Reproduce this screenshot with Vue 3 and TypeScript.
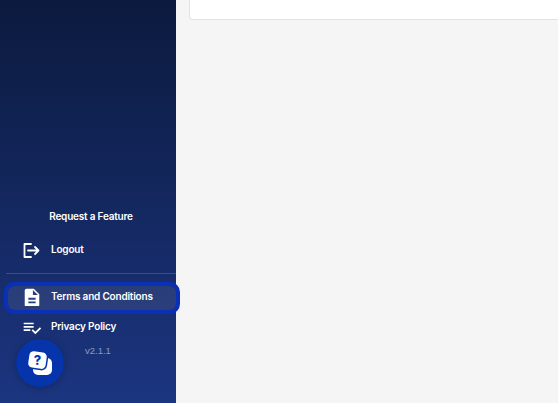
<script setup lang="ts">
  const version = 'v2.1.1'
</script>

<template>
  <div class="page">
    <aside class="sidebar">
      <div class="feature">Request a Feature</div>
      <a class="nav-item logout">
        <svg class="icon" viewBox="0.500 -1 20 20" width="20" height="20" fill="none" stroke="#fff" stroke-width="1.800">
          <path d="M9.500 4H3v13h6.500" stroke-linejoin="round" stroke-linecap="round" />
          <path d="M6.500 10.500H17M13.500 7l3.500 3.500-3.500 3.500" stroke-linejoin="round" stroke-linecap="round" />
        </svg>
        <span>Logout</span>
      </a>
      <div class="divider"></div>
      <a class="nav-item active">
        <svg class="icon" viewBox="1 -1 22 22" width="20" height="20">
          <path fill="#fff" d="M14 2H6c-1.100 0-2 .9-2 2v16c0 1.100.9 2 2 2h12c1.100 0 2-.9 2-2V8l-6-6zm2 16H8v-2h8v2zm0-4H8v-2h8v2zm-3-5V3.500L18.500 9H13z" />
        </svg>
        <span>Terms and Conditions</span>
      </a>
      <a class="nav-item">
        <svg class="icon" viewBox="0 -2 24 24" width="20" height="20">
          <path fill="#fff" d="M14 10H2v2h12v-2zm0-4H2v2h12V6zM2 16h8v-2H2v2zm19.500-4.500L23 13l-6.990 7-4.510-4.500L13 14l3.010 3 5.490-5.500z" />
        </svg>
        <span>Privacy Policy</span>
      </a>
      <div class="version">{{ version }}</div>
    </aside>
    <main class="content">
      <div class="card"></div>
    </main>
    <button class="help">
      <svg viewBox="0 0 26 26" width="26" height="26">
        <rect x="6" y="8" width="19" height="17" rx="5" fill="#fff" />
        <rect x="1" y="1" width="19" height="18" rx="5" fill="#fff" stroke="#0534ab" stroke-width="1.500" transform="rotate(8 10 10)" />
        <text x="10.500" y="15" text-anchor="middle" class="q">?</text>
      </svg>
    </button>
  </div>
</template>

<style>
  html,
  body {
    margin: 0;
    height: 100%;
    overflow: hidden;
  }
</style>

<style scoped>
  .page {
    position: relative;
    display: flex;
    width: 558px;
    height: 403px;
    background-color: #f5f5f5;
    font-family: 'Inter', 'Roboto', sans-serif;
    overflow: hidden;
  }

  .sidebar {
    display: flex;
    flex-direction: column;
    flex-shrink: 0;
    width: 176px;
    padding-bottom: 45px;
    box-sizing: border-box;
    justify-content: flex-end;
    background: linear-gradient(180deg, #0b1a3e 0%, #1c3580 100%);
    color: #fff;
    font-size: 10px;
    font-weight: 600;
    letter-spacing: -0.2px;
  }

  .feature {
    height: 16px;
    line-height: 16px;
    text-align: center;
    width: 182px;
    margin-bottom: 10px;
  }

  .nav-item {
    display: flex;
    align-items: center;
    height: 30px;
    padding-left: 22px;
    gap: 9px;
    box-sizing: border-box;
  }

  .icon {
    flex-shrink: 0;
  }

  .divider {
    height: 1px;
    margin: 9px 0 12px 6px;
    background-color: rgba(255, 255, 255, 0.16);
  }

  .active {
    width: 168px;
    height: 24px;
    margin-left: 8px;
    margin-bottom: 1px;
    padding-left: 14px;
    padding-bottom: 4px;
    border-radius: 6px;
    background-color: rgba(255, 255, 255, 0.08);
    outline: 4px solid #0a30b8;
    position: relative;
  }

  .version {
    padding-left: 85px;
    height: 14px;
    line-height: 14px;
    margin-top: 3px;
    color: rgba(255, 255, 255, 0.5);
    font-size: 9.500px;
    font-weight: 400;
    letter-spacing: 0;
    font-family: 'Liberation Sans', sans-serif;
  }

  .content {
    flex: 1;
    padding-left: 13px;
  }

  .card {
    height: 19px;
    border: 1px solid #e2e2e2;
    border-top: none;
    border-right: none;
    border-radius: 0 0 0 4px;
    background-color: #fff;
  }

  .help {
    position: absolute;
    left: 16px;
    top: 339px;
    display: flex;
    align-items: center;
    justify-content: center;
    width: 48px;
    height: 48px;
    padding: 0;
    border: none;
    border-radius: 50%;
    background-color: #0534ab;
    box-shadow: 0 1px 6px rgba(0, 0, 0, 0.25);
  }

  .q {
    font-family: 'Inter', sans-serif;
    font-size: 13px;
    font-weight: 800;
    fill: #0534ab;
  }
</style>
